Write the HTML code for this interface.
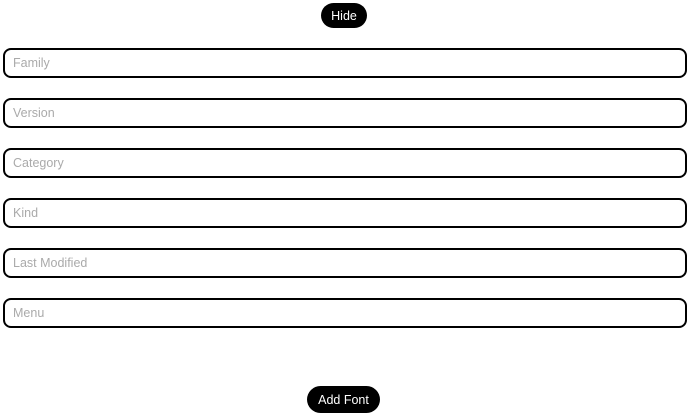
<!DOCTYPE html>
<html><head><style>
body{margin:0;width:689px;height:415px;background:#fff;font-family:"Liberation Sans","DejaVu Sans",sans-serif;position:relative;overflow:hidden}
.btn{position:absolute;background:#000;color:#fff;border-radius:14px;font-size:12.5px;display:flex;align-items:center;justify-content:center}
.in{position:absolute;left:3px;height:26px;border:2px solid #000;border-radius:8px;color:#aaa;font-size:12.5px;line-height:27px;padding-left:8px;box-sizing:content-box;width:672px}
</style></head><body>
<div class="btn" style="left:321px;top:3px;width:46px;height:25px">Hide</div>
<div class="in" style="top:48px">Family</div>
<div class="in" style="top:98px">Version</div>
<div class="in" style="top:148px">Category</div>
<div class="in" style="top:198px">Kind</div>
<div class="in" style="top:248px">Last Modified</div>
<div class="in" style="top:298px">Menu</div>
<div class="btn" style="left:307px;top:386px;width:73px;height:27px">Add Font</div>
</body></html>
